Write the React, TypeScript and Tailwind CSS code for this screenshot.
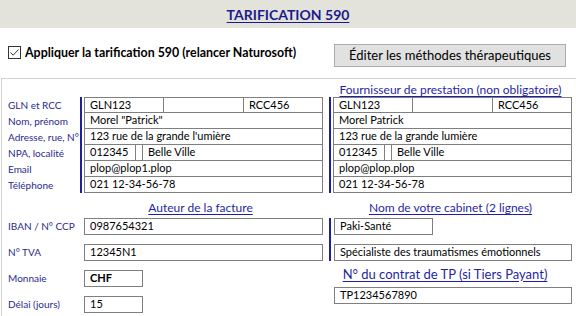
const font = "font-['Lato','Noto_Sans',sans-serif]";

function Cell({ children, className = "" }: { children?: React.ReactNode; className?: string }) {
  return <div className={"h-full flex items-center pl-[5px] whitespace-nowrap " + className}>{children}</div>;
}

function Identity({
  name,
  address,
  email,
}: {
  name: string;
  address: string;
  email: string;
}) {
  return (
    <div className="w-full border border-[#7f7f7f] text-[11px] text-black">
      <div className="h-[15px] flex border-b border-[#7f7f7f]">
        <Cell className="w-[79px] border-r border-[#7f7f7f]">GLN123</Cell>
        <div className="flex-1" />
        <Cell className="w-[79px] border-l border-[#7f7f7f]">RCC456</Cell>
      </div>
      <div className="h-[16px] border-b border-[#7f7f7f]">
        <Cell>{name}</Cell>
      </div>
      <div className="h-[16px] border-b border-[#7f7f7f]">
        <Cell>{address}</Cell>
      </div>
      <div className="h-[16px] flex border-b border-[#7f7f7f]">
        <Cell className="w-[51px] border-r border-[#7f7f7f]">012345</Cell>
        <Cell className="flex-1 ml-[6px] border-l border-[#7f7f7f]">Belle Ville</Cell>
      </div>
      <div className="h-[16px] border-b border-[#7f7f7f]">
        <Cell>{email}</Cell>
      </div>
      <div className="h-[15px]">
        <Cell>021 12-34-56-78</Cell>
      </div>
    </div>
  );
}

function Box({ children, className = "" }: { children?: React.ReactNode; className?: string }) {
  return (
    <div className={"h-[17px] border border-[#7f7f7f] flex items-center pl-[5px] text-[11px] text-black whitespace-nowrap " + className}>
      {children}
    </div>
  );
}

function Heading({ children, className = "" }: { children: React.ReactNode; className?: string }) {
  return (
    <div className={"text-center text-[12px] leading-none text-[#1f1fa6] underline underline-offset-2 whitespace-nowrap " + className}>
      {children}
    </div>
  );
}

const labels = ["GLN et RCC", "Nom, prénom", "Adresse, rue, N°", "NPA, localité", "Email", "Téléphone"];

export default function App() {
  return (
    <div className={"w-[576px] h-[316px] overflow-hidden bg-white " + font}>
      <div className="h-[28px] bg-[#e3e3dc] flex items-center justify-center">
        <span className="text-[14px] font-bold text-[#1a1a8e] underline underline-offset-2">TARIFICATION 590</span>
      </div>

      <div className="h-[50px] flex items-center pl-[8px] pr-[10px]">
        <div className="flex items-center gap-[4px] flex-1">
          <svg width="13" height="13" viewBox="0 0 13 13">
            <rect x="0.5" y="0.5" width="12" height="12" fill="white" stroke="#333" />
            <path d="M2.5 6.5 L5.2 9.2 L10.5 3.5" fill="none" stroke="#333" strokeWidth="1" />
          </svg>
          <span className="text-[12.4px] font-bold text-black">Appliquer la tarification 590 (relancer Naturosoft)</span>
        </div>
        <button className="w-[232px] h-[23px] mt-[5px] border border-[#adadad] bg-[#e1e1e1] text-[13px] text-black">
          Éditer les méthodes thérapeutiques
        </button>
      </div>

      <div className="h-[238px] border-t border-l border-[#d2d2d2] ml-px">
        <div className="h-[17px] flex items-end">
          <div className="w-[327px]" />
          <Heading className="w-[243px]">Fournisseur de prestation (non obligatoire)</Heading>
        </div>
        <div className="flex mt-px">
          <div className="w-[78px] pl-[6px] text-[10px] text-[#2a2a8f]">
            {labels.map((l) => (
              <div key={l} className="h-[16px] flex items-center whitespace-nowrap">
                {l}
              </div>
            ))}
          </div>
          <div className="w-[2px] bg-[#1f1f9a]" />
          <div className="w-[239px] ml-[2px]">
            <Identity name={'Morel "Patrick"'} address="123 rue de la grande l'umière" email="plop@plop1.plop" />
          </div>
          <div className="w-[2px] bg-[#1f1f9a] ml-[6px]" />
          <div className="w-[239px] ml-[2px]">
            <Identity name="Morel Patrick" address="123 rue de la grande lumière" email="plop@plop.plop" />
          </div>
        </div>

        <div className="flex mt-[7px]">
          <div className="w-[78px] pl-[6px] text-[10px] text-[#2a2a8f] pt-[18px] whitespace-nowrap">
            <div className="h-[17px] flex items-center">IBAN / N° CCP</div>
            <div className="h-[17px] mt-[9px] flex items-center">N° TVA</div>
            <div className="h-[17px] mt-[9px] flex items-center">Monnaie</div>
            <div className="h-[17px] mt-[9px] flex items-center">Délai (jours)</div>
          </div>
          <div className="w-[239px] ml-[4px]">
            <Heading className="h-[18px] pt-[2px] pr-[6px]">Auteur de la facture</Heading>
            <Box>0987654321</Box>
            <Box className="mt-[9px]">12345N1</Box>
            <Box className="mt-[9px] w-[59px] font-bold text-[#1f1f9a]">CHF</Box>
            <Box className="mt-[9px] w-[59px]">15</Box>
          </div>
          <div className="w-[243px] ml-[6px]">
            <Heading className="h-[18px] pt-[2px]">Nom de votre cabinet (2 lignes)</Heading>
            <div className="flex">
              <div className="w-[2px] bg-[#1f1f9a]" />
              <div className="flex-1 ml-[3px]">
                <Box className="w-[99px]">Paki-Santé</Box>
                <Box className="mt-[9px] text-[10.25px]">Spécialiste des traumatismes émotionnels</Box>
              </div>
            </div>
            <Heading className="h-[26px] flex items-center justify-center pr-[11px] text-[13px]">N° du contrat de TP (si Tiers Payant)</Heading>
            <Box className="ml-[5px]">TP1234567890</Box>
          </div>
        </div>
      </div>
    </div>
  );
}
